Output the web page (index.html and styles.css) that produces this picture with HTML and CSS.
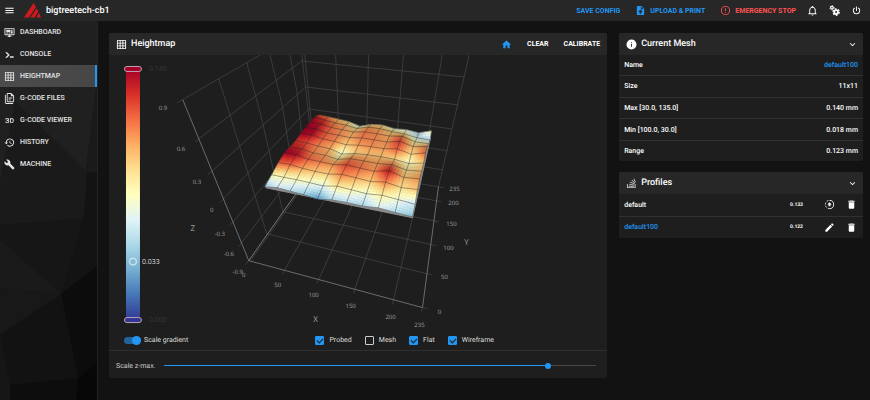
FILE: index.html
```html
<!DOCTYPE html>
<html lang="en">
<head>
  <meta charset="UTF-8">
  <title>Heightmap - bigtreetech-cb1</title>
  <link rel="stylesheet" href="styles.css">
</head>
<body>
  <header class="topbar">
    <button class="icon-btn" aria-label="Menu"><svg class="icon" viewBox="0 0 24 24"><path d="M3 6h18v2H3V6m0 5h18v2H3v-2m0 5h18v2H3v-2z"/></svg></button>
    <svg class="logo" viewBox="0 0 34 30"><path d="M19 0 24 8 10 29H0zM25 11l4 6-8 12h-8zM30 20l4 9h-10z"/></svg>
    <h1>bigtreetech-cb1</h1>
    <div class="top-actions">
      <button class="text-btn blue">SAVE CONFIG</button>
      <button class="text-btn blue"><svg class="icon" viewBox="0 0 24 24"><path d="M14 2H6a2 2 0 0 0-2 2v16a2 2 0 0 0 2 2h12a2 2 0 0 0 2-2V8l-6-6m-1 7V3.500L18.500 9H13m-3 10v-4H7l5-5 5 5h-3v4h-4z"/></svg>UPLOAD &amp; PRINT</button>
      <button class="text-btn red"><svg class="icon" viewBox="0 0 24 24"><path d="M11 15h2v2h-2v-2m0-8h2v6h-2V7m1-5a10 10 0 1 0 0 20 10 10 0 0 0 0-20m0 18a8 8 0 1 1 0-16 8 8 0 0 1 0 16z"/></svg>EMERGENCY STOP</button>
    </div>
    <div class="top-icons">
      <button class="icon-btn" aria-label="Notifications"><svg class="icon" viewBox="0 0 24 24"><path d="M10 21h4a2 2 0 0 1-4 0m11-2v1H3v-1l2-2v-6c0-3.100 2-5.800 5-6.700V4a2 2 0 0 1 4 0v.3c3 .9 5 3.600 5 6.700v6l2 2m-4-8a5 5 0 0 0-10 0v7h10v-7z"/></svg></button>
      <button class="icon-btn" aria-label="Settings"><svg class="icon" viewBox="0 0 24 24"><circle cx="6.500" cy="6" r="3" fill="none" stroke="currentColor" stroke-width="2.500"/><circle cx="6.500" cy="6" r="4.700" fill="none" stroke="currentColor" stroke-width="1.500" stroke-dasharray="2.500 2.420"/><circle cx="15.500" cy="15.500" r="4.200" fill="none" stroke="currentColor" stroke-width="4"/><circle cx="15.500" cy="15.500" r="7" fill="none" stroke="currentColor" stroke-width="2.500" stroke-dasharray="4 3.330"/></svg></button>
      <button class="icon-btn" aria-label="Power"><svg class="icon" viewBox="0 0 24 24"><path d="m16.560 5.440-1.450 1.450A5.970 5.970 0 0 1 18 12a6 6 0 1 1-9.100-5.120L7.440 5.440A7.960 7.960 0 0 0 4 12a8 8 0 1 0 16 0c0-2.720-1.360-5.120-3.440-6.560M13 3h-2v10h2"/></svg></button>
    </div>
  </header>

  <div class="layout">
    <nav class="sidebar">
      <svg class="sidebar-bg" viewBox="0 0 97 379" preserveAspectRatio="none">
        <path fill="#202020" d="M0 0H97V60L86 149 0 204z"/>
        <path fill="#1a1a1a" d="M15 80 86 150 97 60V150L61 273 0 217V160z"/>
        <path fill="#161616" d="M0 204 84 197 61 273 0 219z"/>
        <path fill="#1a1a1a" d="M0 219 61 273 0 267z"/>
        <path fill="#181818" d="M0 267 61 273 0 314z"/>
        <path fill="#121212" d="M0 314 61 273 78 357 10 364z"/>
        <path fill="#131313" d="M87 151 97 152V245L61 273 84 197z"/>
        <path fill="#0c0c0c" d="M61 273 97 245V342L78 357z"/>
        <path fill="#0d0d0d" d="M10 364 78 357 76 379H10z"/>
        <path fill="#070707" d="M78 357 97 342V379H76z"/>
      </svg>
      <a href="#dashboard"><svg class="icon" viewBox="0 0 24 24"><path d="M21 2H3a2 2 0 0 0-2 2v12a2 2 0 0 0 2 2h7v2H8v2h8v-2h-2v-2h7a2 2 0 0 0 2-2V4a2 2 0 0 0-2-2m0 14H3V4h18v12M5 6h9v5H5V6m10 0h4v2h-4V6m4 3v5h-4V9h4M5 12h4v2H5v-2m5 0h4v2h-4v-2z"/></svg>DASHBOARD</a>
      <a href="#console"><svg class="icon" viewBox="0 0 24 24"><path d="M13 19v-3h8v3h-8M8.500 13 2.470 7h4.240l4.960 4.960c.58.580.580 1.540 0 2.120L6.730 19H2.500l6-6z"/></svg>CONSOLE</a>
      <a href="#heightmap" class="active"><svg class="icon" viewBox="0 0 24 24"><path d="M10 4v4h4V4h-4m6 0v4h4V4h-4m0 6v4h4v-4h-4m0 6v4h4v-4h-4m-2 4v-4h-4v4h4m-6 0v-4H4v4h4m0-6v-4H4v4h4m0-6V4H4v4h4m2 6h4v-4h-4v4M4 2h16a2 2 0 0 1 2 2v16a2 2 0 0 1-2 2H4a2 2 0 0 1-2-2V4c0-1.100.9-2 2-2z"/></svg>HEIGHTMAP</a>
      <a href="#files"><svg class="icon" viewBox="0 0 24 24"><path d="M16 0H8C6.900 0 6 .9 6 2v16c0 1.100.9 2 2 2h12c1.100 0 2-.9 2-2V6l-6-6m4 18H8V2h7v5h5v11M4 4v18h16v2H4c-1.100 0-2-.9-2-2V4h2m6 6v2h8v-2h-8m0 4v2h5v-2h-5z"/></svg>G-CODE FILES</a>
      <a href="#viewer"><svg class="icon" viewBox="0 0 24 24"><path d="M5 7h4a2 2 0 0 1 2 2v1.500c0 .8-.7 1.500-1.500 1.500.8 0 1.500.7 1.500 1.500V15a2 2 0 0 1-2 2H5a2 2 0 0 1-2-2v-1h2v1h4v-2H6v-2h3V9H5v1H3V9c0-1.100.9-2 2-2m8 0v10h5a3 3 0 0 0 3-3v-4a3 3 0 0 0-3-3h-5m6 7a1 1 0 0 1-1 1h-3V9h3a1 1 0 0 1 1 1v4z"/></svg>G-CODE VIEWER</a>
      <a href="#history"><svg class="icon" viewBox="0 0 24 24"><path d="M13.500 8H12v5l4.280 2.540.72-1.210-3.500-2.080V8M13 3a9 9 0 0 0-9 9H1l3.960 4.030L9 12H6a7 7 0 1 1 2.060 4.940l-1.420 1.420A9 9 0 1 0 13 3"/></svg>HISTORY</a>
      <a href="#machine"><svg class="icon" viewBox="0 0 24 24"><path d="m22.700 19-9.100-9.100c.9-2.300.4-5-1.500-6.900-2-2-5-2.400-7.400-1.300L9 6 6 9 1.600 4.700C.4 7.100.9 10.100 2.900 12.100c1.900 1.900 4.600 2.400 6.900 1.500l9.100 9.100c.4.4 1 .4 1.400 0l2.300-2.300c.5-.4.5-1.100.1-1.400z"/></svg>MACHINE</a>
    </nav>

    <main class="content">
      <section class="card map-card">
        <div class="card-title">
          <svg class="icon" viewBox="0 0 24 24"><path d="M10 4v4h4V4h-4m6 0v4h4V4h-4m0 6v4h4v-4h-4m0 6v4h4v-4h-4m-2 4v-4h-4v4h4m-6 0v-4H4v4h4m0-6v-4H4v4h4m0-6V4H4v4h4m2 6h4v-4h-4v4M4 2h16a2 2 0 0 1 2 2v16a2 2 0 0 1-2 2H4a2 2 0 0 1-2-2V4c0-1.100.9-2 2-2z"/></svg>
          <h2>Heightmap</h2>
          <div class="title-actions">
            <button class="icon-btn blue" aria-label="Home all"><svg class="icon" viewBox="0 0 24 24"><path d="M10 20v-6h4v6h5v-8h3L12 3 2 12h3v8h5z"/></svg></button>
            <button class="text-btn">CLEAR</button>
            <button class="text-btn">CALIBRATE</button>
          </div>
        </div>

        <svg class="chart" viewBox="109 55 499 273">
          <defs>
            <linearGradient id="scale" x1="0" y1="0" x2="0" y2="1">
              <stop offset="0" stop-color="#a50026"/>
              <stop offset="0.1" stop-color="#d73027"/>
              <stop offset="0.2" stop-color="#f46d43"/>
              <stop offset="0.3" stop-color="#fdae61"/>
              <stop offset="0.4" stop-color="#fee090"/>
              <stop offset="0.5" stop-color="#ffffbf"/>
              <stop offset="0.6" stop-color="#e0f3f8"/>
              <stop offset="0.7" stop-color="#abd9e9"/>
              <stop offset="0.8" stop-color="#74add1"/>
              <stop offset="0.9" stop-color="#4575b4"/>
              <stop offset="1" stop-color="#313695"/>
            </linearGradient>
          </defs>

          <!-- walls and floor -->
          <g class="grid">
            <path d="M177 103 183 99.500 262 54M195 142 302 61 465 77M208 175 306 87 459 105M220 203 309 109 452 129M230 226 311 130 448 151M239 247 313 149 443 170M249 261 315 167"/>
            <path d="M219 79 240 147 267 234M247 63 262 119 283 212M270 54 282 103 297 193M290 54 297 90 307 178M302 54 315 167M305 54 316 167M336 54 341 172M369 54 366 176M404 54 394 180M443 54 421 184"/>
            <path d="M283 274 285 270 341 172M317 284 319 280 366 176M354 294 355 290 394 180M393 305 394 300 421 184"/>
            <path d="M267 234 427 274 432 275M283 212 432 245 437 246M297 193 434 221 439 222M307 178 437 201 442 202M315 167 439 187 444 188M423 308 428 309M422 312 423 308M251 261 316 169M246 265 249 261"/>
            <path d="M470 54 439 187"/>
          </g>
          <path class="axis" d="M183 100 249 261 423 308 439 187M249 261 297 193"/>
          <g id="surface"></g>

          <g class="ticks">
            <text x="163" y="110">0.9</text>
            <text x="181" y="151">0.6</text>
            <text x="197" y="184">0.3</text>
            <text x="212" y="212">0</text>
            <text x="220" y="236">-0.3</text>
            <text x="229" y="256">-0.6</text>
            <text x="238" y="274">-0.9</text>
            <text x="244" y="277">0</text>
            <text x="278" y="287">50</text>
            <text x="314" y="297">100</text>
            <text x="351" y="308">150</text>
            <text x="391" y="319">200</text>
            <text x="420" y="327">235</text>
            <text x="440" y="314">0</text>
            <text x="445" y="279">50</text>
            <text x="449" y="250">100</text>
            <text x="452" y="226">150</text>
            <text x="454" y="205">200</text>
            <text x="455" y="191">235</text>
          </g>
          <g class="names">
            <text x="193" y="231">Z</text>
            <text x="316" y="322">X</text>
            <text x="467" y="245">Y</text>
          </g>

          <!-- colour scale -->
          <rect x="126" y="69" width="14" height="252" fill="url(#scale)"/>
          <rect class="handle" x="124.500" y="66.500" width="17" height="5" rx="2.500" fill="#a50026"/>
          <rect class="handle" x="124.500" y="318" width="17" height="5" rx="2.500" fill="#313695"/>
          <circle class="pointer" cx="133" cy="262" r="3.500"/>
          <text class="limit" x="149" y="71">0.140</text>
          <text class="limit" x="149" y="322">0.000</text>
          <text class="current" x="142" y="264">0.033</text>
        </svg>

        <div class="options">
          <label><input type="checkbox" class="switch" checked>Scale gradient</label>
          <div class="checks">
            <label><input type="checkbox" class="check" checked>Probed</label>
            <label><input type="checkbox" class="check">Mesh</label>
            <label><input type="checkbox" class="check" checked>Flat</label>
            <label><input type="checkbox" class="check" checked>Wireframe</label>
          </div>
        </div>
        <div class="zmax">
          <label for="zmax">Scale z-max.</label>
          <input type="range" id="zmax" min="0" max="9" value="8">
        </div>
      </section>

      <div class="side">
        <section class="card">
          <div class="card-title">
            <svg class="icon" viewBox="0 0 24 24"><path d="M13 9h-2V7h2m0 10h-2v-6h2M12 1a11 11 0 1 0 0 22 11 11 0 0 0 0-22z"/></svg>
            <h2>Current Mesh</h2>
            <button class="icon-btn collapse" aria-label="Collapse"><svg class="icon" viewBox="0 0 24 24"><path d="M7.410 8.580 12 13.170l4.590-4.590L18 10l-6 6-6-6 1.410-1.420z"/></svg></button>
          </div>
          <table class="mesh">
            <tr><th>Name</th><td class="blue">default100</td></tr>
            <tr><th>Size</th><td>11x11</td></tr>
            <tr><th>Max [30.0, 135.0]</th><td>0.140 mm</td></tr>
            <tr><th>Min [100.0, 30.0]</th><td>0.018 mm</td></tr>
            <tr><th>Range</th><td>0.123 mm</td></tr>
          </table>
        </section>

        <section class="card">
          <div class="card-title">
            <svg class="icon stairs" viewBox="0 0 24 24"><path d="M2 13h2v7h15v-7h2v9H2zM6 17h11v2H6zM7 12.500l11 2-.4 1.600L6.600 14zM9 8l10 4-.7 1.500L8.300 9.600zM13 4l7 6.500-1.200 1.200L12 5.300zM18 1l3.500 8-1.500.7L16.500 2z"/></svg>
            <h2>Profiles</h2>
            <button class="icon-btn collapse" aria-label="Collapse"><svg class="icon" viewBox="0 0 24 24"><path d="M7.410 8.580 12 13.170l4.590-4.590L18 10l-6 6-6-6 1.410-1.420z"/></svg></button>
          </div>
          <table class="profiles">
            <tr>
              <th>default</th>
              <td class="value">0.133</td>
              <td class="act"><button class="icon-btn" aria-label="Load"><svg class="icon" viewBox="0 0 24 24"><path fill="none" stroke="currentColor" stroke-width="2" d="M12 3a9 9 0 0 1 0 18"/><path fill="none" stroke="currentColor" stroke-width="2" stroke-dasharray="4 3" d="M12 21a9 9 0 0 1 0-18"/><path d="m12 7 5 5h-3v4h-4v-4H7z"/></svg></button></td>
              <td class="act"><button class="icon-btn" aria-label="Delete"><svg class="icon" viewBox="0 0 24 24"><path d="M19 4h-3.500l-1-1h-5l-1 1H5v2h14M6 19a2 2 0 0 0 2 2h8a2 2 0 0 0 2-2V7H6v12z"/></svg></button></td>
            </tr>
            <tr>
              <th class="blue">default100</th>
              <td class="value">0.122</td>
              <td class="act"><button class="icon-btn" aria-label="Rename"><svg class="icon" viewBox="0 0 24 24"><path d="M20.710 7.040c.39-.39.39-1.040 0-1.410l-2.340-2.340c-.37-.39-1.020-.39-1.410 0l-1.840 1.830 3.750 3.750M3 17.250V21h3.750L17.810 9.930l-3.750-3.750L3 17.250z"/></svg></button></td>
              <td class="act"><button class="icon-btn" aria-label="Delete"><svg class="icon" viewBox="0 0 24 24"><path d="M19 4h-3.500l-1-1h-5l-1 1H5v2h14M6 19a2 2 0 0 0 2 2h8a2 2 0 0 0 2-2V7H6v12z"/></svg></button></td>
            </tr>
          </table>
        </section>
      </div>
    </main>
  </div>

  <script src="heightmap.js"></script>
</body>
</html>
```
FILE: heightmap.js
```js
// probed matrix, front row first, 0 = lowest colour, 1 = highest
const mesh = [
  [0.27, 0.38, 0.32, 0.27, 0.16, 0.30, 0.33, 0.30, 0.40, 0.32, 0.26],
  [0.52, 0.50, 0.50, 0.47, 0.42, 0.58, 0.52, 0.45, 0.54, 0.46, 0.36],
  [0.82, 0.82, 0.72, 0.66, 0.64, 0.78, 0.72, 0.64, 0.78, 0.60, 0.66],
  [1.00, 0.98, 0.82, 0.78, 0.74, 0.86, 0.80, 0.74, 0.95, 0.66, 0.74],
  [0.94, 0.90, 0.76, 0.72, 0.58, 0.76, 0.74, 0.72, 0.78, 0.58, 0.66],
  [0.90, 0.86, 0.76, 0.70, 0.46, 0.62, 0.66, 0.66, 0.62, 0.48, 0.66],
  [1.00, 0.98, 0.82, 0.76, 0.64, 0.72, 0.74, 0.72, 0.84, 0.60, 0.82],
  [1.00, 0.98, 0.82, 0.76, 0.70, 0.78, 0.76, 0.72, 0.88, 0.64, 0.76],
  [1.00, 0.94, 0.80, 0.74, 0.68, 0.78, 0.75, 0.70, 0.78, 0.52, 0.50],
  [0.98, 0.86, 0.74, 0.68, 0.54, 0.72, 0.70, 0.60, 0.54, 0.38, 0.32],
  [0.80, 0.74, 0.66, 0.56, 0.34, 0.54, 0.58, 0.42, 0.44, 0.32, 0.54]
];

const colors = [
  [49, 54, 149], [69, 117, 180], [116, 173, 209], [171, 217, 233], [224, 243, 248],
  [255, 255, 191], [254, 224, 144], [253, 174, 97], [244, 109, 67], [215, 48, 39], [165, 0, 38]
];

// base plane corners: front left, front right, back right, back left
const corners = [[265, 191], [413, 221], [432, 139], [319, 127]];
const LIFT = 15;
const STEPS = 5;
const surface = document.getElementById("surface");

function planeMap([p0, p1, p2, p3]) {
  const dx1 = p1[0] - p2[0], dx2 = p3[0] - p2[0], dx3 = p0[0] - p1[0] + p2[0] - p3[0];
  const dy1 = p1[1] - p2[1], dy2 = p3[1] - p2[1], dy3 = p0[1] - p1[1] + p2[1] - p3[1];
  const det = dx1 * dy2 - dx2 * dy1;
  const g = (dx3 * dy2 - dx2 * dy3) / det;
  const h = (dx1 * dy3 - dx3 * dy1) / det;
  return (u, v) => {
    const w = g * u + h * v + 1;
    return [
      ((p1[0] - p0[0] + g * p1[0]) * u + (p3[0] - p0[0] + h * p3[0]) * v + p0[0]) / w,
      ((p1[1] - p0[1] + g * p1[1]) * u + (p3[1] - p0[1] + h * p3[1]) * v + p0[1]) / w
    ];
  };
}

const toScreen = planeMap(corners);

function height(x, y) {
  const i = Math.min(9, Math.floor(x)), j = Math.min(9, Math.floor(y));
  const a = x - i, b = y - j;
  return (mesh[j][i] * (1 - a) + mesh[j][i + 1] * a) * (1 - b) +
         (mesh[j + 1][i] * (1 - a) + mesh[j + 1][i + 1] * a) * b;
}

function point(x, y) {
  const p = toScreen(x / 10, y / 10);
  return p[0].toFixed(2) + "," + (p[1] - height(x, y) * LIFT).toFixed(2);
}

function color(x, y) {
  const t = Math.max(0, Math.min(0.999, height(x, y))) * 10;
  const k = Math.floor(t);
  // slopes facing away from the viewer are darker
  const slope = height(x, Math.max(0, y - 0.5)) - height(x, Math.min(10, y + 0.5));
  const light = Math.max(0.78, Math.min(1, 0.93 - slope * 0.8));
  return "rgb(" + colors[k].map((c, n) => Math.round((c + (colors[k + 1][n] - c) * (t - k)) * light)).join(",") + ")";
}

function add(tag, attrs) {
  const el = document.createElementNS("http://www.w3.org/2000/svg", tag);
  for (const key in attrs) el.setAttribute(key, attrs[key]);
  surface.appendChild(el);
}

add("polygon", { class: "flat", points: "266,188 413,218 431,138 319,126" });

const d = 1 / STEPS;
for (let r = 10 * STEPS - 1; r >= 0; r--) {
  for (let c = 0; c < 10 * STEPS; c++) {
    const x = c * d, y = r * d;
    const fill = color(x + d / 2, y + d / 2);
    add("polygon", {
      points: [point(x, y), point(x + d, y), point(x + d, y + d), point(x, y + d)].join(" "),
      fill: fill,
      stroke: fill,
      "stroke-width": 0.4
    });
  }
}

for (let n = 0; n <= 10; n++) {
  const across = [], along = [];
  for (let m = 0; m <= 10; m++) {
    across.push(point(m, n));
    along.push(point(n, m));
  }
  add("polyline", { class: "wire", points: across.join(" ") });
  add("polyline", { class: "wire", points: along.join(" ") });
}

const zmax = document.getElementById("zmax");
function updateFill() {
  zmax.style.setProperty("--fill", (zmax.value / zmax.max * 100) + "%");
}
zmax.addEventListener("input", updateFill);
updateFill();
```
FILE: styles.css
```css
* {
  box-sizing: border-box;
}
body {
  margin: 0;
  min-height: 100vh;
  display: flex;
  flex-direction: column;
  background: #121212;
  color: #fff;
  font-family: Roboto, sans-serif;
  font-size: 7px;
  line-height: 10px;
  text-rendering: geometricPrecision;
}
h1, h2 {
  margin: 0;
  font-size: 9px;
  font-weight: 500;
  line-height: 12px;
}
button {
  display: flex;
  align-items: center;
  padding: 0;
  border: 0;
  background: none;
  color: inherit;
  font: inherit;
  cursor: pointer;
}
.icon {
  display: block;
  flex: none;
  width: 11px;
  height: 11px;
  fill: currentColor;
}
.text-btn {
  gap: 4px;
  font-weight: 700;
}
.blue {
  color: #2196f3;
}
.red {
  color: #ff5252;
}

/* top bar */
.topbar {
  display: flex;
  align-items: center;
  height: 21px;
  padding: 0 8px 0 4px;
  background: #272727;
}
.logo {
  width: 17px;
  height: 15px;
  margin: 0 5px 0 9px;
  fill: #d11a1f;
}
.top-actions {
  display: flex;
  align-items: center;
  gap: 15px;
  margin-left: auto;
}
.top-icons {
  display: flex;
  gap: 11px;
  margin-left: 11px;
}

/* sidebar */
.layout {
  flex: 1;
  display: flex;
}
.sidebar {
  position: relative;
  width: 98px;
  flex: none;
  border-right: 1px solid #232323;
  background: #161616;
}
.sidebar-bg {
  position: absolute;
  inset: 0;
  width: 100%;
  height: 100%;
}
.sidebar a {
  position: relative;
  display: flex;
  align-items: center;
  gap: 5px;
  height: 22px;
  padding-left: 4px;
  color: #e4e4e4;
  font-weight: 500;
  text-decoration: none;
}
.sidebar a.active {
  border-right: 2px solid #2196f3;
  background: linear-gradient(90deg, #4c4c4c, #464646);
}

/* cards */
.content {
  flex: 1;
  display: grid;
  grid-template-columns: 47fr 23fr;
  gap: 12px;
  align-items: start;
  min-width: 0;
  padding: 12px 7px 12px 11px;
}
.card {
  border-radius: 2px;
  background: #1e1e1e;
  overflow: hidden;
}
.side {
  display: grid;
  gap: 11px;
}
.card-title {
  display: flex;
  align-items: center;
  gap: 4px;
  height: 22px;
  padding: 0 7px;
  background: #272727;
}
.title-actions {
  display: flex;
  align-items: center;
  gap: 15px;
  margin-left: auto;
}
.collapse {
  margin-left: auto;
  margin-right: -2px;
}
.stairs {
  color: #ccc;
}

/* chart */
.chart {
  display: block;
  width: 100%;
}
.grid {
  fill: none;
  stroke: #484848;
  stroke-width: 0.7;
}
.axis {
  fill: none;
  stroke: #808080;
  stroke-width: 0.8;
}
.flat {
  fill: #8c8c8c;
  stroke: #8c8c8c;
  stroke-width: 1;
}
.wire {
  fill: none;
  stroke: #222;
  stroke-opacity: 0.6;
  stroke-width: 0.7;
}
.ticks {
  fill: #a0a0a0;
  font-family: "Open Sans", sans-serif;
  font-size: 6px;
  text-anchor: middle;
}
.names {
  fill: #a0a0a0;
  font-family: "Open Sans", sans-serif;
  font-size: 8px;
  text-anchor: middle;
}
.handle {
  stroke: #b9a5b5;
  stroke-width: 1;
}
.pointer {
  fill: none;
  stroke: #e6f2f8;
  stroke-width: 1;
}
.limit {
  fill: #363636;
  font-family: "Open Sans", sans-serif;
  font-size: 7px;
}
.current {
  fill: #ddd;
  font-family: "Open Sans", sans-serif;
  font-size: 7px;
}

/* chart options */
.options {
  display: flex;
  align-items: center;
  height: 23px;
  padding: 3px 0 0 15px;
  border-bottom: 1px solid #2f2f2f;
  color: #ddd;
}
.options label {
  display: flex;
  align-items: center;
}
.checks {
  flex: 1;
  display: flex;
  justify-content: center;
  gap: 13px;
  padding-left: 14px;
}
.switch, .check {
  appearance: none;
  position: relative;
  margin: 0;
}
.switch {
  width: 17px;
  height: 7px;
  margin-right: 3px;
  border-radius: 4px;
  background: #21639a;
}
.switch::after {
  content: "";
  position: absolute;
  top: -1px;
  right: 0;
  width: 9px;
  height: 9px;
  border-radius: 50%;
  background: #2196f3;
}
.switch:not(:checked)::after {
  right: auto;
  left: 0;
}
.check {
  width: 9px;
  height: 9px;
  margin-right: 5px;
  border: 1px solid #ccc;
  border-radius: 1px;
}
.check:checked {
  border-color: #2196f3;
  background: #2196f3;
}
.check:checked::after {
  content: "";
  position: absolute;
  top: 1px;
  left: 1px;
  width: 5px;
  height: 3px;
  border-left: 1px solid #1e1e1e;
  border-bottom: 1px solid #1e1e1e;
  transform: rotate(-45deg);
}
.zmax {
  display: flex;
  align-items: center;
  gap: 6px;
  height: 27px;
  padding: 3px 8px 0 7px;
  color: #ccc;
}
.zmax input {
  appearance: none;
  flex: 1;
  min-width: 0;
  height: 6px;
  margin: 0;
  background: linear-gradient(90deg, #2196f3 var(--fill), #484848 var(--fill)) center / calc(100% - 6px) 1px no-repeat;
}
.zmax input::-webkit-slider-thumb {
  appearance: none;
  width: 6px;
  height: 6px;
  border-radius: 50%;
  background: #2196f3;
}

/* tables */
table {
  width: 100%;
  border-collapse: collapse;
}
th, td {
  padding: 0 5px;
  font-weight: 500;
}
th {
  text-align: left;
}
td {
  text-align: right;
}
tr + tr {
  border-top: 1px solid #303030;
}
.mesh {
  height: 106px;
}
.profiles tr {
  height: 22px;
}
.profiles .value {
  padding-right: 16px;
  font-size: 5px;
  font-weight: 700;
}
.profiles .act {
  width: 22px;
}
```
